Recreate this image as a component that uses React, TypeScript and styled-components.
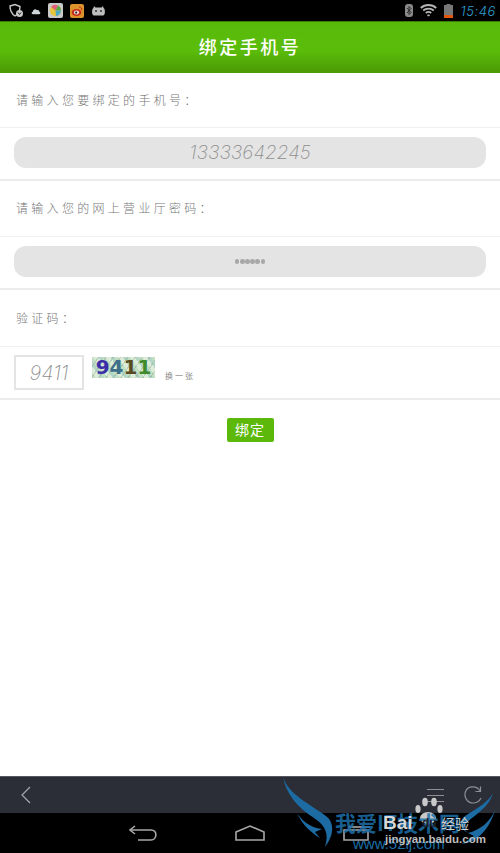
import * as React from "react";
import styled, { createGlobalStyle } from "styled-components";

const GlobalStyle = createGlobalStyle`
  html, body {
    margin: 0;
    padding: 0;
    background: #fff;
  }
  #root {
    height: 853px;
  }
`;

const Page = styled.div`
  position: relative;
  display: flex;
  flex-direction: column;
  width: 500px;
  height: 853px;
  overflow: hidden;
  font-family: "Noto Sans CJK SC", sans-serif;
`;

const StatusBar = styled.div`
  display: flex;
  align-items: center;
  justify-content: space-between;
  height: 21px;
  padding: 0 4px 0 9px;
  background: #000;
  flex: none;
`;

const StatusGroup = styled.div<{ $gap: number }>`
  display: flex;
  align-items: center;
  gap: ${({ $gap }) => $gap}px;
`;

const Clock = styled.span`
  font-family: "Inter", sans-serif;
  font-size: 13px;
  font-style: italic;
  font-weight: 300;
  letter-spacing: 0.6px;
  color: #2f9ed0;
  margin-left: 1px;
`;

const Header = styled.div`
  display: flex;
  align-items: center;
  justify-content: center;
  height: 52px;
  flex: none;
  padding-bottom: 4px;
  background: linear-gradient(#58b90b 0%, #5bbd0a 55%, #4d9f05 92%, #4b9a05 100%);
  border-top: 1px solid #3d7f06;
  box-sizing: border-box;
`;

const Title = styled.h1`
  margin: 0;
  font-size: 18px;
  font-weight: 500;
  letter-spacing: 2.5px;
  color: #fff;
`;

const Content = styled.div`
  flex: 1;
  display: flex;
  flex-direction: column;
  background: #fff;
`;

const LabelRow = styled.div<{ $height: number }>`
  display: flex;
  align-items: center;
  height: ${({ $height }) => $height}px;
  padding: 0 0 2px 16px;
  box-sizing: border-box;
  border-bottom: 1px solid #f0f0f0;
  font-size: 12px;
  font-weight: 300;
  letter-spacing: 3.3px;
  color: #777;
`;

const FieldRow = styled.div<{ $height: number }>`
  height: ${({ $height }) => $height}px;
  padding: 9px 14px 0;
  box-sizing: border-box;
  border-bottom: 2px solid #ececec;
`;

const Pill = styled.div<{ $size: number }>`
  display: flex;
  align-items: center;
  justify-content: center;
  height: 31px;
  border-radius: 12px;
  background: #e4e4e4;
  font-family: "Inter", sans-serif;
  font-size: ${({ $size }) => $size}px;
  font-style: italic;
  font-weight: 200;
  color: #8f8f8f;
`;

const Dots = styled.span`
  display: flex;
  gap: 0.6px;
`;

const Dot = styled.i`
  display: block;
  width: 4.6px;
  height: 4.6px;
  border-radius: 50%;
  background: #a8a8a8;
`;

const CaptchaRow = styled.div`
  display: flex;
  align-items: flex-start;
  height: 53px;
  padding: 8px 14px 0;
  box-sizing: border-box;
  border-bottom: 2px solid #ececec;
`;

const CaptchaInput = styled.div`
  display: flex;
  align-items: center;
  justify-content: center;
  width: 70px;
  height: 35px;
  box-sizing: border-box;
  border: 2px solid #e4e4e4;
  font-family: "Inter", sans-serif;
  font-size: 20px;
  font-style: italic;
  font-weight: 200;
  color: #8f8f8f;
`;

const CaptchaImage = styled.div`
  display: flex;
  align-items: center;
  justify-content: center;
  width: 63px;
  height: 21px;
  margin: 2px 0 0 8px;
  background:
    repeating-linear-gradient(125deg, transparent 0 5px, rgba(120, 150, 130, 0.35) 5px 6px),
    repeating-linear-gradient(55deg, #c4e0c4 0 3px, #dcecd8 3px 7px, #b4d6c6 7px 10px);
  font-family: "DejaVu Sans", sans-serif;
  font-size: 20px;
  font-weight: 700;
  line-height: 21px;
`;

const CaptchaDigit = styled.span<{ $color: string }>`
  color: ${({ $color }) => $color};
`;

const Refresh = styled.span`
  margin: 15px 0 0 10px;
  font-size: 8px;
  line-height: 12px;
  letter-spacing: 2px;
  color: #888;
`;

const Actions = styled.div`
  display: flex;
  justify-content: center;
  padding-top: 18px;
`;

const BindButton = styled.div`
  display: flex;
  align-items: center;
  justify-content: center;
  width: 47px;
  height: 24px;
  padding-bottom: 2px;
  box-sizing: border-box;
  border-radius: 2px;
  background: #5cb90b;
  color: #fff;
  font-size: 14px;
  letter-spacing: 1px;
`;

const Toolbar = styled.div`
  display: flex;
  align-items: center;
  justify-content: space-between;
  height: 37px;
  flex: none;
  padding: 0 17px 0 20px;
  box-sizing: border-box;
  background: #2b2e37;
  border-top: 1px solid #55575e;
`;

const NavBar = styled.div`
  display: flex;
  align-items: center;
  height: 40px;
  flex: none;
  padding-left: 129px;
  gap: 78px;
  background: #000;
`;

const Watermark = styled.div`
  position: absolute;
  left: 282px;
  top: 776px;
  width: 218px;
  height: 77px;
  pointer-events: none;
`;

const Wings = styled.svg`
  position: absolute;
  inset: 0;
`;

const WmBlue = styled.span`
  position: absolute;
  left: 53px;
  top: 34px;
  font-size: 21px;
  line-height: 24px;
  font-weight: 700;
  white-space: nowrap;
  color: #1d6fa8;
  opacity: 0.85;
`;

const WmBaidu = styled.span`
  position: absolute;
  left: 101px;
  top: 36px;
  font-family: "Liberation Sans", sans-serif;
  font-size: 19px;
  line-height: 22px;
  font-weight: 700;
  white-space: nowrap;
  color: #d8d8d8;
`;

const WmDu = styled.span`
  position: absolute;
  left: 140px;
  top: 40px;
  font-family: "Liberation Sans", sans-serif;
  font-size: 12px;
  line-height: 14px;
  font-weight: 700;
  color: #1f2026;
`;

const WmJy = styled.span`
  position: absolute;
  left: 159px;
  top: 39px;
  font-size: 14px;
  line-height: 16px;
  white-space: nowrap;
  color: #cfcfcf;
`;

const WmDomain = styled.span`
  position: absolute;
  left: 103px;
  top: 57px;
  font-family: "Liberation Sans", sans-serif;
  font-size: 11.5px;
  line-height: 13px;
  font-weight: 700;
  white-space: nowrap;
  color: #bdbdbd;
`;

const WmSite = styled.span`
  position: absolute;
  left: 71px;
  top: 61px;
  font-family: "Liberation Sans", sans-serif;
  font-size: 15px;
  line-height: 14px;
  white-space: nowrap;
  color: #1d6fa8;
`;

const ShieldIcon = () => (
  <svg width="15" height="15" viewBox="0 0 15 15" fill="none">
    <path d="M1 3 L6 1.5 L11 3.5 C11 8 9 11 6 13 C3 11 1 8 1 3 Z" stroke="#c8c8c8" strokeWidth="1.4" />
    <circle cx="10.5" cy="10.5" r="3.5" fill="#c8c8c8" />
    <path d="M9 9.5 L10.5 11.5 L12 9.5" stroke="#222" strokeWidth="1" />
  </svg>
);

const CloudIcon = () => (
  <svg width="10" height="8" viewBox="0 0 12 10">
    <path d="M2 9 C0 9 0 6 2 6 C2 3 6 2 7 4 C9 3 11 5 10 6 C12 6 12 9 10 9 Z" fill="#cfd4d8" />
  </svg>
);

const ColorAppIcon = () => (
  <svg width="15" height="15" viewBox="0 0 15 15">
    <rect width="15" height="15" rx="2" fill="#c9c9c9" />
    <circle cx="7.5" cy="7.5" r="5.5" fill="#e8c63c" />
    <path d="M7.5 7.5 L3 4 A5.5 5.5 0 0 1 10 2.5 Z" fill="#e0607a" />
    <path d="M7.5 7.5 L10 2.5 A5.5 5.5 0 0 1 13 7.5 Z" fill="#58a848" />
    <path d="M7.5 7.5 L13 7.5 A5.5 5.5 0 0 1 8 13 Z" fill="#4aa8c8" />
  </svg>
);

const WeiboIcon = () => (
  <svg width="14" height="14" viewBox="0 0 14 14">
    <rect width="14" height="14" rx="2" fill="#d9932a" />
    <ellipse cx="6.5" cy="8.5" rx="4.8" ry="3.4" fill="#c6281e" />
    <ellipse cx="6.5" cy="8.5" rx="2.6" ry="2" fill="#f4e6dc" />
    <circle cx="6.2" cy="8.6" r="1.1" fill="#222" />
    <path d="M9 3 C11 3 12 4.5 11.8 6" stroke="#c6281e" strokeWidth="1" fill="none" />
  </svg>
);

const RobotIcon = () => (
  <svg width="15" height="11" viewBox="0 0 15 11">
    <path d="M3 1 L4.5 2.5 H10.5 L12 1 L12.5 3 C14.5 4 14.5 10.5 12 10.5 H3 C0.5 10.5 0.5 4 2.5 3 Z" fill="#bdbdbd" />
    <circle cx="5" cy="6" r="1" fill="#333" />
    <circle cx="10" cy="6" r="1" fill="#333" />
  </svg>
);

const BluetoothIcon = () => (
  <svg width="8" height="13" viewBox="0 0 8 13">
    <rect width="8" height="13" rx="3" fill="#8a8a8a" />
    <path d="M2 4 L6 8.5 L4 10.5 V2.5 L6 4.5 L2 9" stroke="#222" strokeWidth="0.9" fill="none" />
  </svg>
);

const WifiIcon = () => (
  <svg width="17" height="13" viewBox="0 0 17 13" fill="none" stroke="#b5b5b5">
    <path d="M0.8 4 C5 0 12 0 16.2 4" strokeWidth="1.8" />
    <path d="M3.2 6.5 C6 4 11 4 13.8 6.5" strokeWidth="1.8" />
    <path d="M5.8 9 C7.3 7.8 9.7 7.8 11.2 9" strokeWidth="1.8" />
    <path d="M7.5 11 L8.5 12.2 L9.5 11 Z" fill="#b5b5b5" strokeWidth="1" />
  </svg>
);

const BatteryIcon = () => (
  <svg width="9" height="14" viewBox="0 0 9 14">
    <rect x="2.5" y="0" width="4" height="1.5" fill="#777" />
    <rect x="0" y="1" width="9" height="13" fill="#777" />
    <rect x="0" y="11" width="9" height="3" fill="#e2560d" />
  </svg>
);

const BackChevron = () => (
  <svg width="12" height="20" viewBox="0 0 12 20" fill="none" stroke="#a5a7ab" strokeWidth="1.2">
    <path d="M10 2 L2 10 L10 18" />
  </svg>
);

const MenuIcon = () => (
  <svg width="18" height="15" viewBox="0 0 18 15" stroke="#8d8f94" strokeWidth="1.2">
    <path d="M1 1.5 H18 M1 7.5 H18 M1 13.5 H18" />
  </svg>
);

const ReloadIcon = () => (
  <svg width="20" height="20" viewBox="0 0 20 20" fill="none" stroke="#8d8f94" strokeWidth="1.2">
    <path d="M17 6 C14 0.5 5 0.5 2.5 6.5 C0.5 12 4.5 18 10 18 C13.5 18 16.5 16 18 13" />
    <path d="M17.5 1.5 V6.5 H12.5" />
  </svg>
);

const NavBack = () => (
  <svg width="28" height="17" viewBox="0 0 28 17" fill="none" stroke="#a8a8a8" strokeWidth="1.6">
    <path d="M6 1 L1 5 L6 9" />
    <path d="M1 5 H22 C29 5 28 15 22 15 H9" />
  </svg>
);

const NavHome = () => (
  <svg width="30" height="16" viewBox="0 0 30 16" fill="none" stroke="#a8a8a8" strokeWidth="1.6">
    <path d="M1 7 L15 1 L29 7 V15 H1 Z" />
  </svg>
);

const NavRecent = () => (
  <svg width="28" height="15" viewBox="0 0 28 15" fill="none" stroke="#a8a8a8" strokeWidth="1.6">
    <path d="M1 4 H25 V14 H1 Z" />
    <path d="M5 1 H27" />
  </svg>
);

const WatermarkWings = () => (
  <Wings width="218" height="77" viewBox="0 0 218 77">
    <g fill="#c9c9c9">
      <ellipse cx="146" cy="42" rx="8" ry="6" />
      <ellipse cx="136" cy="33" rx="2.6" ry="4" />
      <ellipse cx="143" cy="26" rx="2.8" ry="4.2" />
      <ellipse cx="152" cy="26" rx="2.8" ry="4.2" />
      <ellipse cx="158" cy="33" rx="2.6" ry="4" />
    </g>
    <g fill="#1c6ba3">
      <path d="M1 1 C6 18 28 28 44 40 C52 46 53 58 43 71 C47 58 44 50 32 42 C16 32 4 18 1 1 Z" />
      <path d="M15 37 C22 48 32 52 40 53 L33 56 L38 62 C28 56 20 48 15 37 Z" />
      <path d="M211 17 C208 28 198 36 190 42 C182 48 180 52 186 57 C176 52 176 44 186 38 C196 32 206 26 211 17 Z" />
      <path d="M213 34 C208 46 198 54 186 57 L192 60 L180 68 C196 66 208 52 213 34 Z" />
    </g>
  </Wings>
);

const FieldLabel = ({ height, children }: { height: number; children: React.ReactNode }) => (
  <LabelRow $height={height}>{children}</LabelRow>
);

export default function App() {
  return (
    <>
      <GlobalStyle />
      <Page>
        <StatusBar>
          <StatusGroup $gap={7}>
            <ShieldIcon />
            <CloudIcon />
            <ColorAppIcon />
            <WeiboIcon />
            <RobotIcon />
          </StatusGroup>
          <StatusGroup $gap={7}>
            <BluetoothIcon />
            <WifiIcon />
            <BatteryIcon />
            <Clock>15:46</Clock>
          </StatusGroup>
        </StatusBar>
        <Header>
          <Title>绑定手机号</Title>
        </Header>
        <Content>
          <FieldLabel height={55}>请输入您要绑定的手机号：</FieldLabel>
          <FieldRow $height={53}>
            <Pill $size={19}>13333642245</Pill>
          </FieldRow>
          <FieldLabel height={56}>请输入您的网上营业厅密码：</FieldLabel>
          <FieldRow $height={53}>
            <Pill $size={12}>
              <Dots>
                {[0, 1, 2, 3, 4, 5].map((i) => (
                  <Dot key={i} />
                ))}
              </Dots>
            </Pill>
          </FieldRow>
          <FieldLabel height={57}>验证码：</FieldLabel>
          <CaptchaRow>
            <CaptchaInput>9411</CaptchaInput>
            <CaptchaImage>
              <CaptchaDigit $color="#3a2fa8">9</CaptchaDigit>
              <CaptchaDigit $color="#3d6f88">4</CaptchaDigit>
              <CaptchaDigit $color="#5a4a20">1</CaptchaDigit>
              <CaptchaDigit $color="#3f8a2a">1</CaptchaDigit>
            </CaptchaImage>
            <Refresh>换一张</Refresh>
          </CaptchaRow>
          <Actions>
            <BindButton>绑定</BindButton>
          </Actions>
        </Content>
        <Toolbar>
          <BackChevron />
          <StatusGroup $gap={19}>
            <MenuIcon />
            <ReloadIcon />
          </StatusGroup>
        </Toolbar>
        <NavBar>
          <NavBack />
          <NavHome />
          <NavRecent />
        </NavBar>
        <Watermark>
          <WatermarkWings />
          <WmBlue>我爱IT技术网</WmBlue>
          <WmBaidu>Bai</WmBaidu>
          <WmDu>du</WmDu>
          <WmJy>经验</WmJy>
          <WmSite>www.52ij.com</WmSite>
          <WmDomain>jingyan.baidu.com</WmDomain>
        </Watermark>
      </Page>
    </>
  );
}
